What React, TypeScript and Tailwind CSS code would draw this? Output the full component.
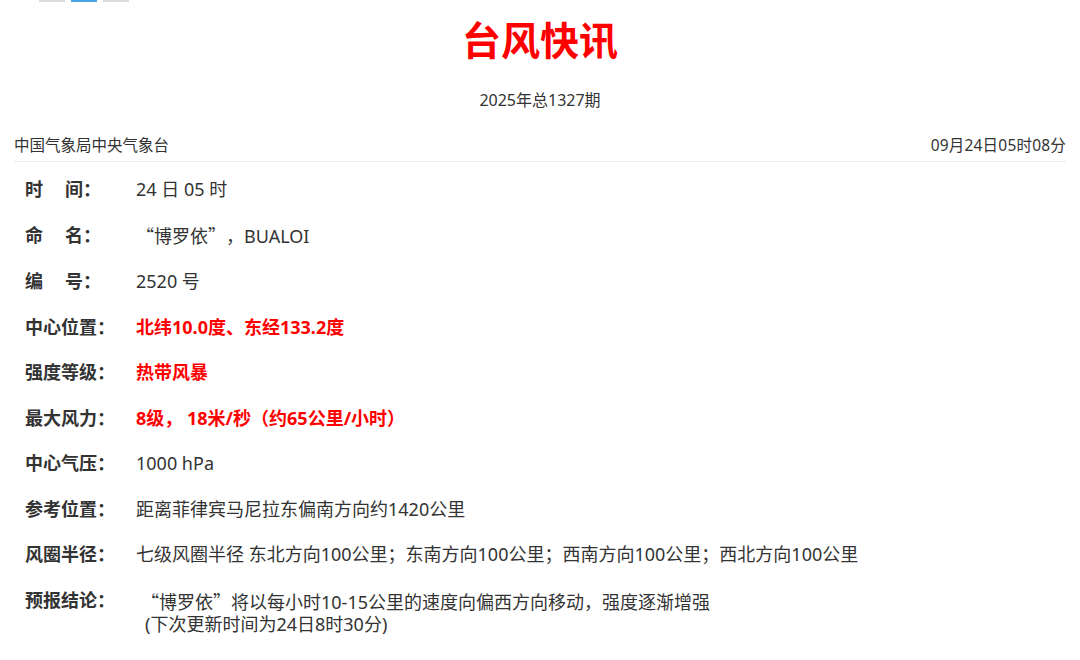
import React from "react";

const QL = () => (
  <span className="inline-block w-[18px] text-right font-['Noto_Sans_CJK_SC']">“</span>
);
const QR = () => (
  <span className="inline-block w-[18px] text-left font-['Noto_Sans_CJK_SC']">”</span>
);

function Row({
  label,
  children,
  red = false,
  last = false,
}: {
  label: React.ReactNode;
  children: React.ReactNode;
  red?: boolean;
  last?: boolean;
}) {
  return (
    <div className="flex py-[12px] leading-[21.5px]">
      <div className="w-[111px] shrink-0 font-bold text-[#333]">{label}</div>
      <div className={red ? "font-bold text-[#ff0000]" : last ? "text-[#333] leading-[22px] pl-[9px]" : "text-[#333]"}>
        {children}
      </div>
    </div>
  );
}

export default function App() {
  return (
    <div className="w-[1080px] h-[660px] overflow-hidden bg-white font-['Noto_Sans','Noto_Sans_CJK_SC',sans-serif] text-[#333]">
      <div className="flex gap-[6px] pl-[39px] h-[2px]">
        <div className="w-[26px] h-[2px] bg-[#dcdcdc]" />
        <div className="w-[26px] h-[2px] bg-[#4aa3e6]" />
        <div className="w-[26px] h-[2px] bg-[#dcdcdc]" />
      </div>
      <div className="mt-[11px] text-center text-[39px] leading-[50px] font-bold text-[#ff0000] font-['Noto_Sans_CJK_SC',sans-serif]">
        台风快讯
      </div>
      <div className="mt-[27px] text-center text-[16px] leading-[20px] text-[#333]">2025年总1327期</div>
      <div className="mx-[14px] mt-[25px] flex justify-between border-b border-[#ebebeb] pb-[6px] text-[15.5px] leading-[20px] text-[#333]">
        <span>中国气象局中央气象台</span>
        <span className="tracking-[0.2px]">09月24日05时08分</span>
      </div>
      <div className="mt-[5px] ml-[25px] text-[18px]">
        <Row label={<>时<span className="ml-[22px]">间：</span></>}>24 日 05 时</Row>
        <Row label={<>命<span className="ml-[22px]">名：</span></>}>
          <QL />博罗依<QR />，BUALOI
        </Row>
        <Row label={<>编<span className="ml-[22px]">号：</span></>}>2520 号</Row>
        <Row label="中心位置：" red>
          北纬10.0度、东经133.2度
        </Row>
        <Row label="强度等级：" red>
          热带风暴
        </Row>
        <Row label="最大风力：" red>
          8级， 18米/秒（约65公里/小时）
        </Row>
        <Row label="中心气压：">1000 hPa</Row>
        <Row label="参考位置：">距离菲律宾马尼拉东偏南方向约1420公里</Row>
        <Row label="风圈半径：">七级风圈半径 东北方向100公里；东南方向100公里；西南方向100公里；西北方向100公里</Row>
        <Row label="预报结论：" last>
          <div className="ml-[-4px]">
            <QL />博罗依<QR />将以每小时10-15公里的速度向偏西方向移动，强度逐渐增强
          </div>
          <div>(下次更新时间为24日8时30分)</div>
        </Row>
      </div>
    </div>
  );
}
